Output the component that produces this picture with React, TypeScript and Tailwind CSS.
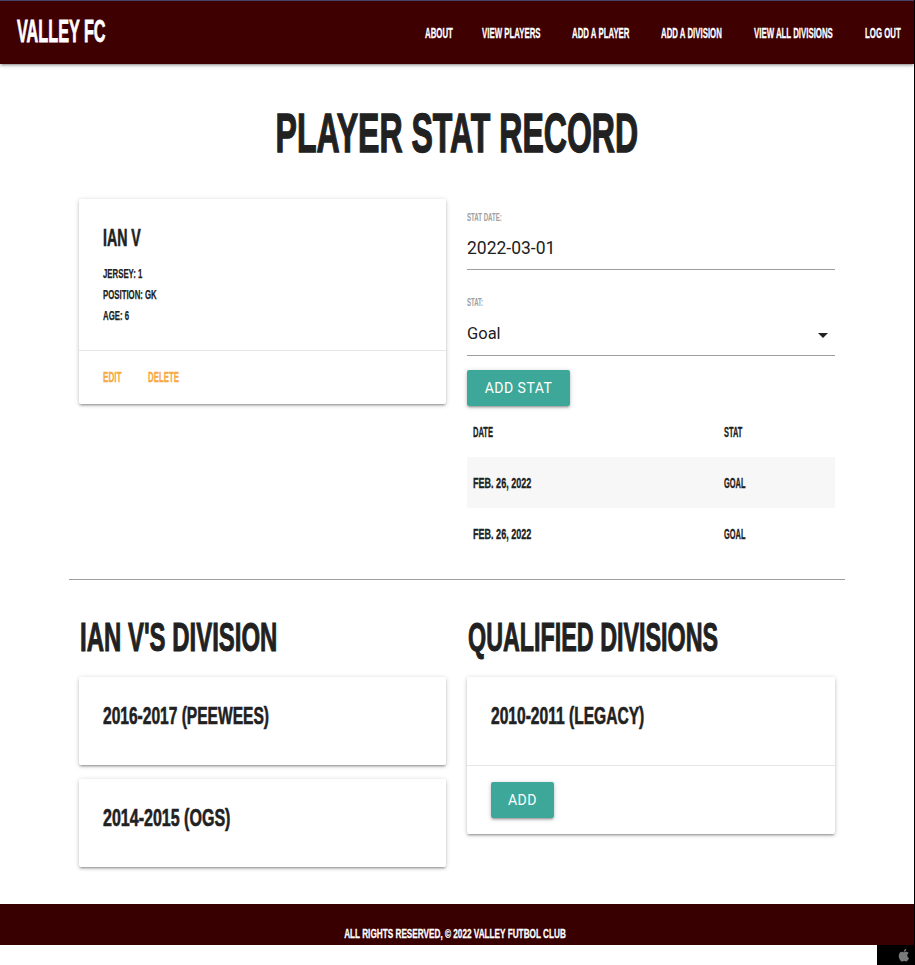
import React from "react";

const cond = "font-['Liberation_Sans',Arial,sans-serif] font-bold uppercase";
const roboto = "font-['Roboto','Liberation_Sans',sans-serif]";
const shadow =
  "shadow-[0_2px_2px_0_rgba(0,0,0,0.14),0_3px_1px_-2px_rgba(0,0,0,0.12),0_1px_5px_0_rgba(0,0,0,0.2)]";

function S({ className, children }: { className: string; children: React.ReactNode }) {
  return <span className={`inline-block whitespace-nowrap ${className}`}>{children}</span>;
}

function Card({ children }: { children: React.ReactNode }) {
  return <div className={`bg-white rounded-[2px] ${shadow}`}>{children}</div>;
}

function TealButton({ label, w }: { label: string; w: string }) {
  return (
    <button
      className={`${roboto} ${w} block h-9 bg-[#3da899] text-white text-[14px] tracking-[0.5px] rounded-[2px] ${shadow}`}
    >
      {label}
    </button>
  );
}

const navLinks: { label: string; w: string }[] = [
  { label: "About", w: "w-[27px]" },
  { label: "View Players", w: "w-[60px]" },
  { label: "Add a Player", w: "w-[59px]" },
  { label: "Add a Division", w: "w-[63px]" },
  { label: "View All Divisions", w: "w-[81px]" },
  { label: "Log Out", w: "w-[34px]" },
];

export default function App() {
  return (
    <div className="relative w-[915px] min-h-[965px] bg-white text-[#212121] border-r border-black">
      <div className="h-px bg-[#4a4670]" />
      <nav className={`relative z-10 h-[63px] bg-[#3e0000] flex items-center justify-between pl-[17px] pr-[15px] ${shadow}`}>
        <div className={`${cond} text-white text-[31px] leading-[31px] mb-[3px] [-webkit-text-stroke:0.8px_#ffffff]`}>
          <S className="origin-left scale-x-[0.523]">Valley FC</S>
        </div>
        <ul className="flex gap-[30px]">
          {navLinks.map((l) => (
            <li key={l.label} className={`${cond} ${l.w} text-white text-[14px] leading-[16px] [-webkit-text-stroke:0.3px_#ffffff]`}>
              <S className="origin-left scale-x-[0.56]">{l.label}</S>
            </li>
          ))}
        </ul>
      </nav>

      <h1 className={`${cond} text-center text-[56px] leading-[56px] mt-[41px] [-webkit-text-stroke:1.4px_#212121]`}>
        <S className="origin-center scale-x-[0.572]">Player Stat Record</S>
      </h1>

      <div className="mx-[69px] mt-[38px]">
        <div className="flex gap-[21px] px-[10px]">
          <div className="w-[367px]">
            <Card>
              <div className="px-6 pt-6 pb-6">
                <div className={`${cond} text-[24px] leading-[30px] [-webkit-text-stroke:0.6px_#212121]`}>
                  <S className="origin-left scale-x-[0.59]">Ian V</S>
                </div>
                <div className={`${cond} text-[13px] leading-[21px] mt-[10px] [-webkit-text-stroke:0.25px_#212121]`}>
                  <div><S className="origin-left scale-x-[0.6]">Jersey: 1</S></div>
                  <div><S className="origin-left scale-x-[0.6]">Position: GK</S></div>
                  <div><S className="origin-left scale-x-[0.6]">Age: 6</S></div>
                </div>
              </div>
              <div className="border-t border-[#e6e6e6] px-6 pt-4 pb-4 flex">
                <div className={`${cond} w-[45px] text-[14.5px] leading-[21px] text-[#f7a943] [-webkit-text-stroke:0.3px_#f7a943]`}>
                  <S className="origin-left scale-x-[0.56]">Edit</S>
                </div>
                <div className={`${cond} text-[14.5px] leading-[21px] text-[#f7a943] [-webkit-text-stroke:0.3px_#f7a943]`}>
                  <S className="origin-left scale-x-[0.54]">Delete</S>
                </div>
              </div>
            </Card>
          </div>

          <div className="w-[368px]">
            <div className={`${cond} text-[10px] leading-[12px] text-[#9e9e9e] mt-[13px]`}>
              <S className="origin-left scale-x-[0.61]">Stat Date:</S>
            </div>
            <div className={`${roboto} text-[17.5px] leading-[24px] mt-[12px] pb-[9px] border-b border-[#9e9e9e]`}>
              2022-03-01
            </div>
            <div className={`${cond} text-[10px] leading-[12px] text-[#9e9e9e] mt-[27px]`}>
              <S className="origin-left scale-x-[0.6]">Stat:</S>
            </div>
            <div className={`${roboto} text-[16.5px] leading-[24px] mt-[13px] pb-[9px] border-b border-[#9e9e9e] flex justify-between items-center`}>
              <span>Goal</span>
              <svg width="10" height="5" viewBox="0 0 10 5" className="mr-[7px] mt-[2px]">
                <path d="M0 0 L10 0 L5 5 Z" fill="#212121" />
              </svg>
            </div>
            <div className="mt-[14px]">
              <TealButton label="ADD STAT" w="w-[103px]" />
            </div>
            <table className="w-full border-collapse">
              <tbody>
                <tr className="h-[51px]">
                  <td className={`${cond} text-[14px] leading-[16px] pl-[6px] w-[251px] align-middle [-webkit-text-stroke:0.3px_#212121]`}>
                    <S className="origin-left scale-x-[0.54]">Date</S>
                  </td>
                  <td className={`${cond} text-[14px] leading-[16px] pl-[6px] align-middle [-webkit-text-stroke:0.3px_#212121]`}>
                    <S className="origin-left scale-x-[0.53]">Stat</S>
                  </td>
                </tr>
                {[0, 1].map((i) => (
                  <tr key={i} className={`h-[51px] ${i === 0 ? "bg-[#f7f7f7]" : ""}`}>
                    <td className={`${cond} text-[14px] leading-[16px] pl-[6px] align-middle [-webkit-text-stroke:0.3px_#212121]`}>
                      <S className="origin-left scale-x-[0.646]">Feb. 26, 2022</S>
                    </td>
                    <td className={`${cond} text-[14px] leading-[16px] pl-[6px] align-middle [-webkit-text-stroke:0.3px_#212121]`}>
                      <S className="origin-left scale-x-[0.53]">Goal</S>
                    </td>
                  </tr>
                ))}
              </tbody>
            </table>
          </div>
        </div>

        <div className="mt-[20px] border-t border-[#9e9e9e]" />

        <div className="flex gap-[21px] px-[10px] mt-[33px]">
          <div className="w-[367px]">
            <h2 className={`${cond} text-[40px] leading-[48px] ml-px [-webkit-text-stroke:1px_#212121]`}>
              <S className="origin-left scale-x-[0.599]">Ian V's Division</S>
            </h2>
            <div className="mt-[16px] flex flex-col gap-[14px]">
              <Card>
                <div className={`${cond} text-[24px] leading-[30px] px-6 pt-6 pb-[34px] [-webkit-text-stroke:0.6px_#212121]`}>
                  <S className="origin-left scale-x-[0.648]">2016-2017 (Peewees)</S>
                </div>
              </Card>
              <Card>
                <div className={`${cond} text-[24px] leading-[30px] px-6 pt-6 pb-[34px] [-webkit-text-stroke:0.6px_#212121]`}>
                  <S className="origin-left scale-x-[0.668]">2014-2015 (OGs)</S>
                </div>
              </Card>
            </div>
          </div>
          <div className="w-[368px]">
            <h2 className={`${cond} text-[40px] leading-[48px] ml-px [-webkit-text-stroke:1px_#212121]`}>
              <S className="origin-left scale-x-[0.583]">Qualified Divisions</S>
            </h2>
            <div className="mt-[16px]">
              <Card>
                <div className={`${cond} text-[24px] leading-[30px] px-6 pt-6 pb-[34px] [-webkit-text-stroke:0.6px_#212121]`}>
                  <S className="origin-left scale-x-[0.649]">2010-2011 (Legacy)</S>
                </div>
                <div className="border-t border-[#e6e6e6] px-6 pt-4 pb-4">
                  <TealButton label="ADD" w="w-[63px]" />
                </div>
              </Card>
            </div>
          </div>
        </div>
      </div>

      <footer className="mt-[37px] h-[41px] bg-[#380000] flex items-end justify-center pb-[3px]">
        <div className={`${cond} text-white text-[12.5px] leading-[15px] mr-[5px] [-webkit-text-stroke:0.3px_#ffffff]`}>
          <S className="origin-center scale-x-[0.656]">All rights reserved, © 2022 Valley Futbol Club</S>
        </div>
      </footer>

      <div className="absolute right-[-1px] bottom-0 w-[38px] h-[20px] bg-black flex items-center justify-end pr-[5px]">
        <svg width="12" height="14" viewBox="0 0 15 17">
          <path
            d="M11.6 9.1c0-2 1.6-2.9 1.7-3-1-1.4-2.4-1.6-2.9-1.6-1.2-.1-2.4.7-3 .7s-1.6-.7-2.6-.7C3.5 4.6 2.3 5.3 1.6 6.5.2 9 1.2 12.6 2.6 14.6c.7 1 1.5 2.1 2.5 2 1-.04 1.4-.65 2.6-.65s1.6.65 2.6.63c1.1 0 1.8-1 2.4-2 .8-1.1 1.1-2.2 1.1-2.3 0 0-2.2-.8-2.2-3.2zM9.6 3.2c.5-.7.9-1.6.8-2.5-.8 0-1.8.5-2.300 1.200-.5.6-1 1.500-.8 2.400.9.1 1.800-.4 2.300-1.100z"
            fill="#7a7a7a"
          />
        </svg>
      </div>
    </div>
  );
}
